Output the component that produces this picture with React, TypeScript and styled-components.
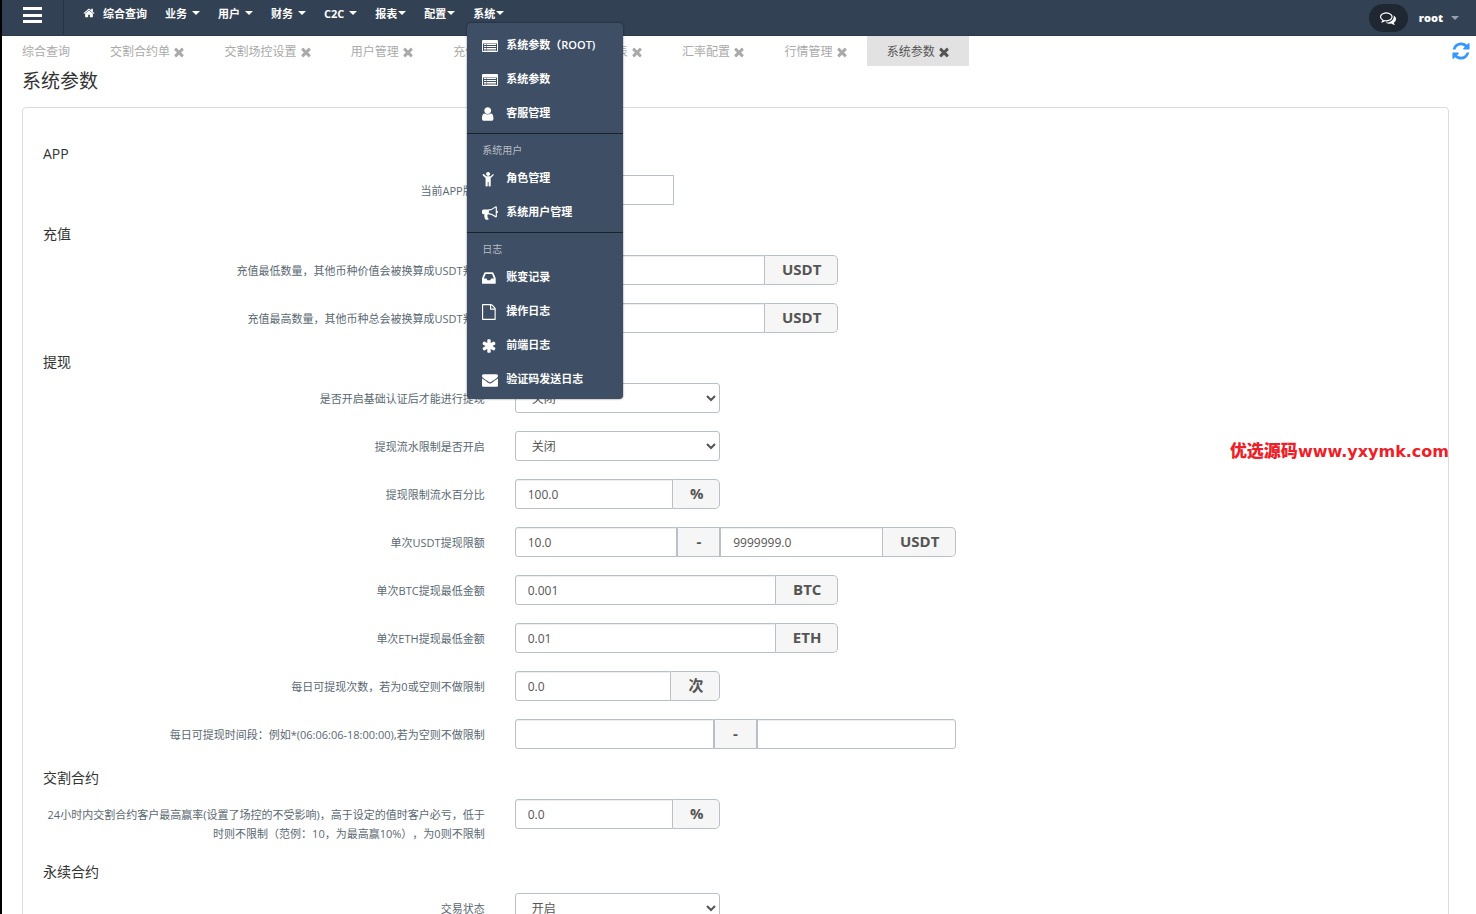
import React from "react";
import styled, { createGlobalStyle, css } from "styled-components";

const sans = `"Open Sans", "Noto Sans CJK SC", sans-serif`;
const fieldBorder = "#b9c1c8";

const GlobalStyle = createGlobalStyle`
  *, *::before, *::after { box-sizing: border-box; }
  body { margin: 0; background: #fff; font-family: ${sans}; color: #333; text-spacing-trim: space-all; }
  ul { list-style: none; margin: 0; padding: 0; }
  a { color: inherit; text-decoration: none; }
  button, input, select { font-family: inherit; }
`;

/* ---------- icons ---------- */

const paths = {
  times:
    "M1490 1322q0 40-28 68l-136 136q-28 28-68 28t-68-28l-294-294-294 294q-28 28-68 28t-68-28l-136-136q-28-28-28-68t28-68l294-294-294-294q-28-28-28-68t28-68l136-136q28-28 68-28t68 28l294 294 294-294q28-28 68-28t68 28l136 136q28 28 28 68t-28 68l-294 294 294 294q28 28 28 68z",
  home: "M1472 992v480q0 26-19 45t-45 19h-384v-384h-256v384h-384q-26 0-45-19t-19-45v-480q0-1 .5-3t.5-3l575-474 575 474q1 2 1 6zm223-69l-62 74q-8 9-21 11h-3q-13 0-21-7l-692-577-692 577q-12 8-24 7-13-2-21-11l-62-74q-8-10-7-23.5t11-21.5l719-599q32-26 76-26t76 26l244 204v-195q0-14 9-23t23-9h192q14 0 23 9t9 23v408l219 182q10 8 11 21.5t-7 23.5z",
  refresh:
    "M1639 1056q0 5-1 7-64 268-268 434.5t-478 166.5q-146 0-282.5-55t-243.5-157l-129 129q-19 19-45 19t-45-19-19-45v-448q0-26 19-45t45-19h448q26 0 45 19t19 45-19 45l-137 137q71 66 161 102t187 36q134 0 250-65t186-179q11-17 53-117 8-23 30-23h192q13 0 22.5 9.5t9.5 22.5zm25-800v448q0 26-19 45t-45 19h-448q-26 0-45-19t-19-45 19-45l138-138q-148-137-349-137-134 0-250 65t-186 179q-11 17-53 117-8 23-30 23h-199q-13 0-22.5-9.5t-9.5-22.5v-7q65-268 270-434.5t480-166.5q146 0 284 55.5t245 156.5l130-129q19-19 45-19t45 19 19 45z",
  comments:
    "M704 384q-153 0-286 52t-211.5 141-78.5 191q0 82 53 158t149 132l97 56-35 84q34-20 62-39l44-31 53 10q78 14 153 14 153 0 286-52t211.5-141 78.5-191-78.5-191-211.5-141-286-52zm0-128q191 0 353.5 68.5t256.5 186.5 94 257-94 257-256.5 186.5-353.5 68.5q-86 0-176-16-124 88-278 128-36 9-86 16h-3q-11 0-20.5-8t-11.5-21q-1-3-1-6.5t.5-6.5 2-6l2.5-5 3.5-5.5 4-5 4.5-5 4-4.5q5-6 23-25t26-29.5 22.5-29 25-38.5 20.5-44q-124-72-195-177t-71-224q0-139 94-257t256.5-186.5 353.5-68.5zm822 1169q10 24 20.5 44t25 38.5 22.5 29 26 29.5 23 25q1 1 4 4.5t4.5 5 4 5 3.5 5.5l2.5 5 2 6 .5 6.5-1 6.5q-3 14-13 22t-22 7q-50-7-86-16-154-40-278-128-90 16-176 16-271 0-472-132 58 4 88 4 161 0 309-45t264-129q125-92 192-212t67-254q0-77-23-152 129 71 204 178t75 230q0 120-71 224.5t-195 176.5z",
  listAlt:
    "M112 224h1568q112 0 112 112v1120q0 112-112 112h-1568q-112 0-112-112v-1120q0-112 112-112zM112 616v840h1568v-840zM224 672h224v112h-224zM504 672h1064v112h-1064zM224 896h224v112h-224zM504 896h1064v112h-1064zM224 1120h224v112h-224zM504 1120h1064v112h-1064zM224 1288h224v112h-224zM504 1288h1064v112h-1064z",
  user: "M1536 1399q0 109-62.5 187t-150.5 78h-854q-88 0-150.5-78t-62.5-187q0-85 8.5-160.5t31.5-152 58.5-131 94-89 134.5-34.5q131 128 313 128t313-128q76 0 134.5 34.5t94 89 58.5 131 31.5 152 8.5 160.5zm-256-887q0 159-112.5 271.5t-271.5 112.5-271.5-112.5-112.5-271.5 112.5-271.5 271.5-112.5 271.5 112.5 112.5 271.5z",
  child:
    "M1500 360q28 28 28 68t-28 68l-300 300v816q0 52-30 84t-90 32-90-32-30-84v-380h-96v380q0 52-30 84t-90 32-90-32-30-84v-816l-300-300q-28-28-28-68t28-68 68-28 68 28l228 228h512l228-228q28-28 68-28t68 28zM1130 330q0 92-66 158t-158 66-158-66-66-158 66-158 158-66 158 66 66 158z",
  bullhorn:
    "M1664 640q53 0 90.5 37.5t37.5 90.5-37.5 90.5-90.5 37.5v384q0 52-38 90t-90 38q-417-347-812-380-58 19-91 66t-31 100.5 40 92.5q-20 33-23 65.5t6 58 33.5 55 48 50 61.5 50.5q-29 58-111.5 83t-168.5 11.5-132-55.5q-7-23-29.5-87.5t-32-94.5-23-89-15-101 3.5-98.5 22-110.5h-122q-66 0-113-47t-47-113v-192q0-66 47-113t113-47h480q435 0 896-384 52 0 90 38t38 90v384zm-128 604v-954q-394 302-768 343v270q377 42 768 341z",
  inbox:
    "M1151 960h316q-1-3-2.5-8t-2.5-8l-212-496h-708l-212 496q-1 2-2.5 8t-2.5 8h316l95 192h320zm513 30v482q0 26-19 45t-45 19h-1408q-26 0-45-19t-19-45v-482q0-62 25-123l238-552q10-25 36.5-42t52.5-17h832q26 0 52.5 17t36.5 42l238 552q25 61 25 123z",
  file: "M1596 380q28 28 48 76t20 88v1152q0 40-28 68t-68 28h-1344q-40 0-68-28t-28-68v-1600q0-40 28-68t68-28h896q40 0 88 20t76 48zm-444-244v376h376q-10-29-22-41l-313-313q-12-12-41-22zm384 1528v-1024h-416q-40 0-68-28t-28-68v-416h-768v1536h1280z",
  asterisk:
    "M1546 1050q46 26 59.5 77.5t-12.5 97.5l-64 110q-26 46-77.5 59.5t-97.5-12.5l-266-153v307q0 52-38 90t-90 38h-128q-52 0-90-38t-38-90v-307l-266 153q-46 26-97.5 12.5t-77.5-59.5l-64-110q-26-46-12.5-97.5t59.5-77.5l266-154-266-154q-46-26-59.5-77.5t12.5-97.5l64-110q26-46 77.5-59.5t97.5 12.5l266 153v-307q0-52 38-90t90-38h128q52 0 90 38t38 90v307l266-153q46-26 97.5-12.5t77.5 59.5l64 110q26 46 12.5 97.5t-59.5 77.5l-266 154z",
  envelope:
    "M1792 710v794q0 66-47 113t-113 47h-1472q-66 0-113-47t-47-113v-794q44 49 101 87 362 246 497 345 57 42 92.5 65.5t94.5 48 110 24.5h2q51 0 110-24.5t94.5-48 92.5-65.5q170-123 498-345 57-39 100-87zm0-294q0 79-49 151t-122 123q-376 261-468 325-10 7-42.5 31t-54 38.5-52 32.5-57.5 27-50 9h-2q-23 0-50-9t-57.5-27-52-32.5-54-38.5-42.5-31q-91-64-262-182.5t-205-142.5q-62-42-117-115.5t-55-136.5q0-78 41.5-130t118.5-52h1472q65 0 112.5 47t47.5 113z",
};

type IconName = keyof typeof paths;

/* left edge of each glyph inside the 1792 grid, so menu icons share one left edge */
const inset: Partial<Record<IconName, number>> = {
  user: 256,
  child: 224,
  inbox: 128,
  file: 128,
  asterisk: 112,
};

const IconSvg = styled.svg`
  display: block;
  flex: none;
  fill: currentColor;
`;

function Icon({ name, size, flush }: { name: IconName; size: number; flush?: boolean }) {
  const x = flush ? inset[name] ?? 0 : 0;
  return (
    <IconSvg width={size} height={size} viewBox={`${x} 0 1792 1792`} aria-hidden="true">
      <path fillRule={name === "listAlt" ? "evenodd" : "nonzero"} d={paths[name]} />
    </IconSvg>
  );
}

const Caret = styled.span<{ $gap: number; $muted?: boolean }>`
  width: 8px;
  height: 4px;
  margin-left: ${(p) => p.$gap}px;
  border: 4px solid transparent;
  border-top-color: ${(p) => (p.$muted ? "#99a1ab" : "#fff")};
  border-bottom: 0;
`;

/* ---------- frame ---------- */

const Page = styled.div`
  height: 100vh;
  display: flex;
  flex-direction: column;
  overflow: hidden;
  position: relative;
  border-left: 2px solid #000;
`;

const TopBar = styled.header`
  flex: none;
  display: flex;
  height: 36px;
  background: #334154;
  border-bottom: 1px solid #2c394a;
  color: #fff;
`;

const Burger = styled.button`
  width: 62px;
  padding: 7px 21px 12px;
  display: flex;
  flex-direction: column;
  justify-content: space-between;
  background: none;
  border: 0;
  border-right: 1px solid #273446;
`;

const BurgerBar = styled.span`
  height: 3px;
  background: #fff;
`;

const Nav = styled.nav`
  flex: 1;
  padding-left: 19px;
`;

const NavList = styled.ul`
  display: flex;
  gap: 18px;
`;

const NavItem = styled.li`
  position: relative;
`;

const NavLink = styled.a`
  display: flex;
  align-items: center;
  height: 26px;
  font-size: 11px;
  font-weight: 700;
  white-space: nowrap;

  svg {
    margin-right: 8px;
  }
`;

const Account = styled.div`
  display: flex;
  align-items: center;
  padding-right: 17px;
`;

const ChatButton = styled.button`
  display: flex;
  align-items: center;
  justify-content: center;
  width: 39px;
  height: 28px;
  margin-right: 11px;
  padding: 0;
  border: 0;
  border-radius: 14px;
  background: #1f2733;
  color: #fff;
`;

const AccountLink = styled.a`
  display: flex;
  align-items: center;
  font-size: 11px;
  font-weight: 800;
`;

/* ---------- drop-down menu ---------- */

const Menu = styled.div`
  position: absolute;
  z-index: 5;
  top: 23px;
  left: -6px;
  width: 156px;
  padding: 4px 0;
  border-radius: 4px;
  background: #3e4e65;
  box-shadow: 0 0 2px rgba(0, 0, 0, 0.6);
`;

const MenuGroup = styled.ul`
  & + & {
    margin-top: 4px;
    padding-top: 3px;
    border-top: 1px solid #1b222c;
  }
`;

const MenuHeading = styled.li`
  padding: 3px 15px 0;
  line-height: 20px;
  font-size: 10px;
  color: #b9bdc3;
`;

const MenuLink = styled.a`
  display: flex;
  align-items: center;
  gap: 8px;
  height: 34px;
  padding: 0 15px;
  font-size: 11px;
  font-weight: 600;
  color: #fff;
  white-space: nowrap;

  svg {
    margin-top: 4px;
  }
`;

const menuGroups: { heading?: string; items: { icon: IconName; text: string }[] }[] = [
  {
    items: [
      { icon: "listAlt", text: "系统参数（ROOT)" },
      { icon: "listAlt", text: "系统参数" },
      { icon: "user", text: "客服管理" },
    ],
  },
  {
    heading: "系统用户",
    items: [
      { icon: "child", text: "角色管理" },
      { icon: "bullhorn", text: "系统用户管理" },
    ],
  },
  {
    heading: "日志",
    items: [
      { icon: "inbox", text: "账变记录" },
      { icon: "file", text: "操作日志" },
      { icon: "asterisk", text: "前端日志" },
      { icon: "envelope", text: "验证码发送日志" },
    ],
  },
];

function SystemMenu() {
  return (
    <Menu>
      {menuGroups.map((group, i) => (
        <MenuGroup key={i}>
          {group.heading && <MenuHeading>{group.heading}</MenuHeading>}
          {group.items.map((item) => (
            <li key={item.text}>
              <MenuLink href="#">
                <Icon name={item.icon} size={16} flush />
                {item.text}
              </MenuLink>
            </li>
          ))}
        </MenuGroup>
      ))}
    </Menu>
  );
}

/* ---------- tabs ---------- */

const TabBar = styled.div`
  flex: none;
  display: flex;
  align-items: center;
  justify-content: space-between;
  height: 30px;
  padding-right: 5px;
`;

const TabList = styled.ul`
  display: flex;
`;

const Tab = styled.li<{ $active?: boolean }>`
  height: 30px;
  padding: 0 20px;
  line-height: 30px;
  font-size: 13px;
  white-space: nowrap;
  color: ${(p) => (p.$active ? "#555" : "#aaa")};
  background: ${(p) => (p.$active ? "#e2e2e2" : "transparent")};
`;

const TabLink = styled.a`
  font-size: 12px;
`;

const TabClose = styled.button`
  padding: 0;
  border: 0;
  background: none;
  color: inherit;
  vertical-align: middle;
`;

const CloseGlyph = styled(IconSvg).attrs({ viewBox: "128 128 1408 1792" })`
  width: 11px;
  height: 14px;
`;

const RefreshButton = styled.button`
  padding: 0;
  border: 0;
  background: none;
  color: #3598fe;
`;

const tabs = [
  "综合查询",
  "交割合约单",
  "交割场控设置",
  "用户管理",
  "充值订单",
  "用户收益报表",
  "汇率配置",
  "行情管理",
  "系统参数",
];

/* ---------- form ---------- */

const Content = styled.main`
  flex: 1;
  min-height: 0;
  overflow: auto;
  scrollbar-width: none;
  padding: 0 27px 0 20px;
`;

const Title = styled.h1`
  margin: 0 0 11px;
  font-size: 19px;
  line-height: 30px;
  font-weight: 400;
  color: #333;
`;

const Panel = styled.form`
  padding: 35px 20px 20px;
  border: 1px solid #dcdcdc;
  border-radius: 4px;
`;

const SectionTitle = styled.h2`
  margin: 0 0 10px;
  font-size: 14px;
  line-height: 22px;
  font-weight: 400;
  color: #333;
`;

const Row = styled.div`
  display: grid;
  grid-template-columns: repeat(12, minmax(0, 1fr));
  column-gap: 30px;
  align-items: start;
  margin-bottom: 18px;
`;

const RowLabel = styled.label`
  grid-column: span 4;
  padding-top: 6px;
  font-size: 11px;
  line-height: 19px;
  text-align: right;
  color: #5a6872;
`;

const Group = styled.div<{ $span: number }>`
  grid-column: span ${(p) => p.$span};
  display: flex;
  height: 30px;
`;

const control = css`
  height: 30px;
  border: 1px solid ${fieldBorder};
  background: #fff;
  color: #555;
  font-size: 12px;
  outline: 0;
`;

const TextInput = styled.input<{ $end?: boolean }>`
  ${control}
  flex: 1;
  min-width: 0;
  padding: 0 12px;
  border-radius: ${(p) => (p.$end ? "0 3px 3px 0" : "3px 0 0 3px")};
  box-shadow: inset 0 1px 1px rgba(0, 0, 0, 0.07);
`;

const InnerInput = styled(TextInput)`
  border-radius: 0;
`;

const PlainInput = styled.input`
  ${control}
  width: 159px;
  padding: 0 12px;
`;

const Select = styled.select`
  ${control}
  width: 100%;
  padding: 0 0 0 12px;
  border-radius: 3px;
`;

const Addon = styled.span<{ $between?: boolean }>`
  padding: ${(p) => (p.$between ? "0 18px" : "0 16px 0 17px")};
  border: 1px solid ${fieldBorder};
  border-left-width: ${(p) => (p.$between ? "1px" : "0")};
  border-radius: ${(p) => (p.$between ? "0" : "0 5px 5px 0")};
  background: #f6f6f6;
  color: #555;
  font-size: 15px;
  font-weight: 700;
  line-height: 27px;
`;

type Field =
  | { kind: "plain"; label: string }
  | { kind: "select"; label: string; value: string }
  | { kind: "input"; label: string; value: string; unit: string; span: number }
  | { kind: "range"; label: string; from: string; to: string; unit?: string };

const sections: { title: string; fields: Field[] }[] = [
  { title: "APP", fields: [{ kind: "plain", label: "当前APP版本" }] },
  {
    title: "充值",
    fields: [
      { kind: "input", label: "充值最低数量，其他币种价值会被换算成USDT判断", value: "", unit: "USDT", span: 3 },
      { kind: "input", label: "充值最高数量，其他币种总会被换算成USDT判断", value: "", unit: "USDT", span: 3 },
    ],
  },
  {
    title: "提现",
    fields: [
      { kind: "select", label: "是否开启基础认证后才能进行提现", value: "关闭" },
      { kind: "select", label: "提现流水限制是否开启", value: "关闭" },
      { kind: "input", label: "提现限制流水百分比", value: "100.0", unit: "%", span: 2 },
      { kind: "range", label: "单次USDT提现限额", from: "10.0", to: "9999999.0", unit: "USDT" },
      { kind: "input", label: "单次BTC提现最低金额", value: "0.001", unit: "BTC", span: 3 },
      { kind: "input", label: "单次ETH提现最低金额", value: "0.01", unit: "ETH", span: 3 },
      { kind: "input", label: "每日可提现次数，若为0或空则不做限制", value: "0.0", unit: "次", span: 2 },
      { kind: "range", label: "每日可提现时间段：例如*(06:06:06-18:00:00),若为空则不做限制", from: "", to: "" },
    ],
  },
  {
    title: "交割合约",
    fields: [
      {
        kind: "input",
        label:
          "24小时内交割合约客户最高赢率(设置了场控的不受影响)，高于设定的值时客户必亏，低于时则不限制（范例：10，为最高赢10%），为0则不限制",
        value: "0.0",
        unit: "%",
        span: 2,
      },
    ],
  },
  { title: "永续合约", fields: [{ kind: "select", label: "交易状态", value: "开启" }] },
];

function FieldRow({ field, id }: { field: Field; id: string }) {
  return (
    <Row>
      <RowLabel htmlFor={id}>{field.label}</RowLabel>
      {field.kind === "plain" && (
        <Group $span={2}>
          <PlainInput id={id} type="text" />
        </Group>
      )}
      {field.kind === "select" && (
        <Group $span={2}>
          <Select id={id} defaultValue={field.value}>
            <option>开启</option>
            <option>关闭</option>
          </Select>
        </Group>
      )}
      {field.kind === "input" && (
        <Group $span={field.span}>
          <TextInput id={id} type="text" defaultValue={field.value} />
          <Addon>{field.unit}</Addon>
        </Group>
      )}
      {field.kind === "range" && (
        <Group $span={4}>
          <TextInput id={id} type="text" defaultValue={field.from} />
          <Addon $between>-</Addon>
          {field.unit ? (
            <>
              <InnerInput type="text" defaultValue={field.to} aria-label={field.label} />
              <Addon>{field.unit}</Addon>
            </>
          ) : (
            <TextInput $end type="text" defaultValue={field.to} aria-label={field.label} />
          )}
        </Group>
      )}
    </Row>
  );
}

const Watermark = styled.div`
  position: absolute;
  z-index: 4;
  top: 439px;
  right: 27px;
  line-height: 24px;
  font-family: "DejaVu Sans", "Noto Sans CJK SC", sans-serif;
  font-size: 16px;
  font-weight: 700;
  color: #ee2027;
  white-space: nowrap;
`;

const WatermarkName = styled.span`
  font-size: 17px;
  font-weight: 900;
`;

const navItems = [
  { text: "业务", gap: 5 },
  { text: "用户", gap: 5 },
  { text: "财务", gap: 5 },
  { text: "C2C", gap: 5 },
  { text: "报表", gap: 1 },
  { text: "配置", gap: 1 },
];

export default function App() {
  return (
    <Page>
      <GlobalStyle />
      <TopBar>
        <Burger type="button" aria-label="菜单">
          <BurgerBar />
          <BurgerBar />
          <BurgerBar />
        </Burger>
        <Nav>
          <NavList>
            <NavItem>
              <NavLink href="#">
                <Icon name="home" size={12} />
                综合查询
              </NavLink>
            </NavItem>
            {navItems.map((item) => (
              <NavItem key={item.text}>
                <NavLink href="#">
                  {item.text}
                  <Caret $gap={item.gap} />
                </NavLink>
              </NavItem>
            ))}
            <NavItem>
              <NavLink href="#">
                系统
                <Caret $gap={1} />
              </NavLink>
              <SystemMenu />
            </NavItem>
          </NavList>
        </Nav>
        <Account>
          <ChatButton type="button" aria-label="消息">
            <Icon name="comments" size={16} />
          </ChatButton>
          <AccountLink href="#">
            root
            <Caret $gap={8} $muted />
          </AccountLink>
        </Account>
      </TopBar>

      <TabBar>
        <TabList>
          {tabs.map((name, i) => (
            <Tab key={name} $active={i === tabs.length - 1}>
              <TabLink href="#">{name}</TabLink>
              {i > 0 && (
                <>
                  {" "}
                  <TabClose type="button" aria-label={`关闭${name}`}>
                    <CloseGlyph aria-hidden="true">
                      <path d={paths.times} />
                    </CloseGlyph>
                  </TabClose>
                </>
              )}
            </Tab>
          ))}
        </TabList>
        <RefreshButton type="button" aria-label="刷新">
          <Icon name="refresh" size={20} />
        </RefreshButton>
      </TabBar>

      <Content>
        <Title>系统参数</Title>
        <Panel>
          {sections.map((section, s) => (
            <section key={section.title}>
              <SectionTitle>{section.title}</SectionTitle>
              {section.fields.map((field, f) => (
                <FieldRow key={field.label} field={field} id={`field-${s}-${f}`} />
              ))}
            </section>
          ))}
        </Panel>
      </Content>

      <Watermark>
        <WatermarkName>优选源码</WatermarkName>www.yxymk.com
      </Watermark>
    </Page>
  );
}
